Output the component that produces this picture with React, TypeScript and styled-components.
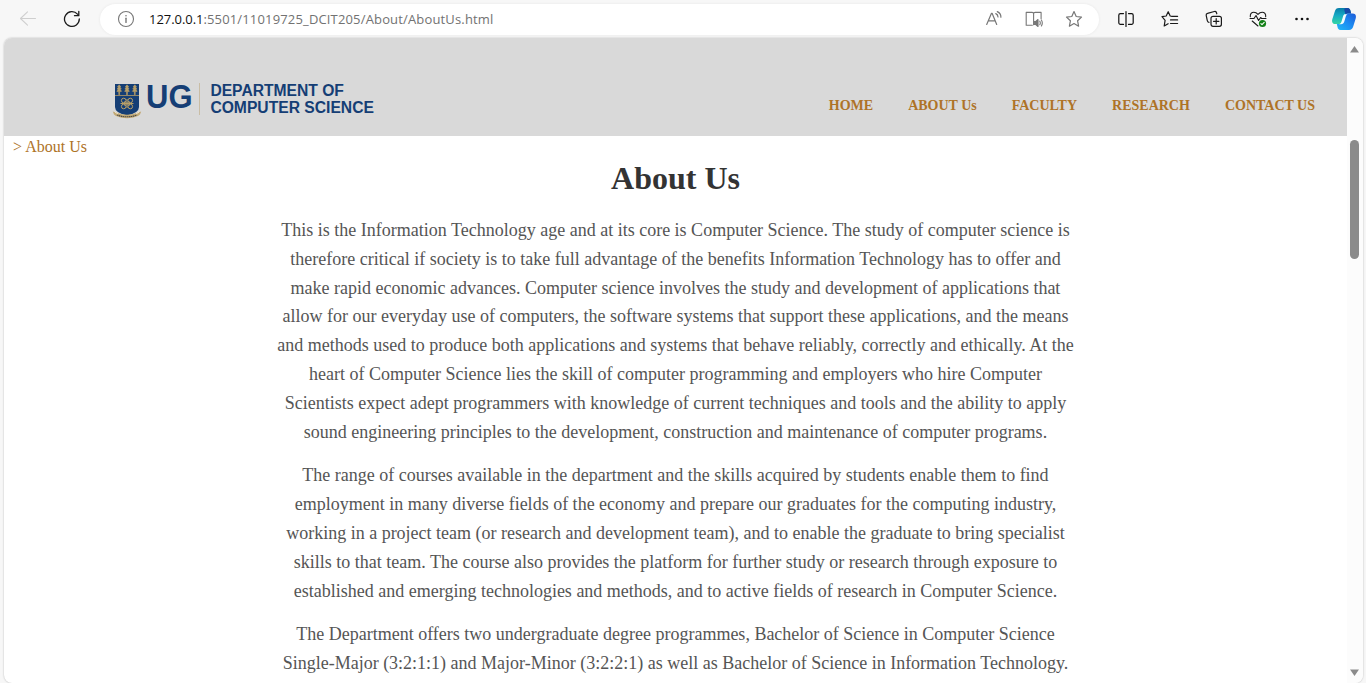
import React from "react";
import styled, { createGlobalStyle } from "styled-components";

const GlobalStyle = createGlobalStyle`
  * { box-sizing: border-box; }
  html, body { margin: 0; padding: 0; overflow: hidden; background: #f7f7f7; }
`;

const Browser = styled.div`
  width: 1366px;
  height: 683px;
  display: flex;
  flex-direction: column;
  overflow: hidden;
  background: #f7f7f7;
`;

const Toolbar = styled.div`
  height: 38px;
  flex: none;
  display: flex;
  align-items: center;
  padding-left: 19px;
`;

const IconSlot = styled.span<{ $gap?: number; $size?: number }>`
  display: flex;
  flex: none;
  width: ${(p) => p.$size ?? 18}px;
  height: ${(p) => p.$size ?? 18}px;
  margin-left: ${(p) => p.$gap ?? 0}px;
  svg { display: block; width: 100%; height: 100%; }
`;

const AddressBar = styled.div`
  width: 999px;
  height: 31px;
  margin-left: 19px;
  padding-left: 17px;
  flex: none;
  display: flex;
  align-items: center;
  border-radius: 16px;
  background: #fff;
  box-shadow: 0 0 3px rgba(0, 0, 0, 0.07);
`;

const Url = styled.span`
  width: 836px;
  margin-left: 14px;
  font: 13px/18px "Open Sans", sans-serif;
  letter-spacing: 0.16px;
  color: #727272;
  white-space: nowrap;
`;

const Host = styled.span`
  color: #111;
  letter-spacing: -0.05px;
`;

const Viewport = styled.div`
  width: 1359px;
  height: 645px;
  margin-left: 4px;
  display: flex;
  overflow: hidden;
  border-radius: 8px;
  background: #fff;
  box-shadow: 0 0 2px rgba(0, 0, 0, 0.28);
`;

const Page = styled.div`
  width: 1343px;
  flex: none;
  font-family: "Liberation Serif", "Times New Roman", serif;
`;

const Header = styled.header`
  height: 98px;
  padding-left: 108px;
  padding-right: 32px;
  display: flex;
  justify-content: space-between;
  background: #d9d9d9;
`;

const Logo = styled.svg`
  width: 270px;
  height: 42px;
  margin-top: 42px;
  font-family: "Liberation Sans", Arial, sans-serif;
  font-weight: bold;
`;

const Nav = styled.nav`
  display: flex;
  gap: 35px;
  margin-top: 59px;
`;

const NavLink = styled.a`
  font-size: 14px;
  line-height: 17px;
  font-weight: bold;
  color: #ae7327;
  white-space: nowrap;
`;

const Breadcrumb = styled.div`
  height: 22px;
  padding: 2px 0 0 9px;
  font-size: 16px;
  line-height: 18px;
  color: #ae7327;
`;

const Article = styled.main`
  width: 100%;
  text-align: center;
`;

const Title = styled.h1`
  margin: 0;
  padding-top: 2px;
  font-size: 32px;
  line-height: 36px;
  color: #333;
`;

const Paragraph = styled.p`
  margin: 0 0 15px;
  font-size: 18px;
  line-height: 28.8px;
  color: #555;
`;

const Copy = styled.div`
  padding-top: 20px;
`;

const Line = styled.span`
  display: block;
  white-space: nowrap;
`;

const Scrollbar = styled.div`
  width: 16px;
  flex: none;
  display: flex;
  flex-direction: column;
  align-items: center;
  background: #fcfcfc;
`;

const Arrow = styled.svg`
  width: 9px;
  height: 7px;
  flex: none;
  margin-top: 8px;
  margin-right: 1px;
`;

const Thumb = styled.div`
  width: 9px;
  height: 119px;
  margin: 87px 1px 402px 0;
  border-radius: 5px;
  background: #8b8b8b;
`;

const paragraphs = [
  [
    "This is the Information Technology age and at its core is Computer Science. The study of computer science is",
    "therefore critical if society is to take full advantage of the benefits Information Technology has to offer and",
    "make rapid economic advances. Computer science involves the study and development of applications that",
    "allow for our everyday use of computers, the software systems that support these applications, and the means",
    "and methods used to produce both applications and systems that behave reliably, correctly and ethically. At the",
    "heart of Computer Science lies the skill of computer programming and employers who hire Computer",
    "Scientists expect adept programmers with knowledge of current techniques and tools and the ability to apply",
    "sound engineering principles to the development, construction and maintenance of computer programs.",
  ],
  [
    "The range of courses available in the department and the skills acquired by students enable them to find",
    "employment in many diverse fields of the economy and prepare our graduates for the computing industry,",
    "working in a project team (or research and development team), and to enable the graduate to bring specialist",
    "skills to that team. The course also provides the platform for further study or research through exposure to",
    "established and emerging technologies and methods, and to active fields of research in Computer Science.",
  ],
  [
    "The Department offers two undergraduate degree programmes, Bachelor of Science in Computer Science",
    "Single-Major (3:2:1:1) and Major-Minor (3:2:2:1) as well as Bachelor of Science in Information Technology.",
  ],
];

const links = ["HOME", "ABOUT Us", "FACULTY", "RESEARCH", "CONTACT US"];

const line = { fill: "none", strokeLinecap: "round", strokeLinejoin: "round" } as const;

const BackIcon = () => (
  <svg viewBox="0 0 18 18" {...line} stroke="#cfcfcf" strokeWidth="1.1">
    <path d="M16.5 8.5H1.5M8.5 1.8L1.5 8.5l7 6.7" />
  </svg>
);

const ReloadIcon = () => (
  <svg viewBox="0 0 18 18" {...line} stroke="#1b1b1b" strokeWidth="1.3">
    <path d="M16.3 9A7.4 7.4 0 1 1 14.5 4.2M15.8 1.5v4.2h-4.3" />
  </svg>
);

const InfoIcon = () => (
  <svg viewBox="0 0 18 18" {...line} stroke="#777" strokeWidth="1.1">
    <circle cx="9" cy="9" r="7.5" />
    <path d="M9 8.2v4.2" strokeWidth="1.4" />
    <circle cx="9" cy="5.7" r=".8" fill="#777" stroke="none" />
  </svg>
);

const ReadAloudIcon = () => (
  <svg viewBox="0 0 18 18" {...line} stroke="#777" strokeWidth="1.2">
    <path d="M1.7 14.500L6.500 3.300h.6l4.600 11.200M3.300 10.800h7M10.800 3.600c1.400.7 2.200 1.800 2.200 3.300M12.300 1.600c2.300 1.100 3.700 3 3.600 5.600" />
  </svg>
);

const ReaderIcon = () => (
  <svg viewBox="0 0 18 18" {...line} stroke="#777" strokeWidth="1.1">
    <path d="M7.3 15.3H1.2V2.4h5.9c.9 0 1.5.5 1.5 1.1v11.2M8.6 3.5c0-.6.6-1.1 1.5-1.1h6v6.4" />
    <path d="M9.3 11.5h1.5l2.2-2v7l-2.2-2H9.3z" fill="#777" />
    <path d="M14.8 11.2q1 1.7 0 3.5M16.4 10q1.8 3 0 6" />
  </svg>
);

const StarIcon = () => (
  <svg viewBox="0 0 18 18" {...line} stroke="#777" strokeWidth="1.2">
    <path d="M9 1.6l2.2 4.9 5.3.6-3.9 3.700 1 5.400L9 13.600l-4.600 2.600 1-5.400L1.500 7.100l5.300-.6z" />
  </svg>
);

const SplitIcon = () => (
  <svg viewBox="0 0 18 18" {...line} stroke="#111" strokeWidth="1.2">
    <path d="M6.5 3.6H3.400a1.600 1.600 0 0 0-1.600 1.600v7.600a1.600 1.600 0 0 0 1.600 1.600h3.100M11.500 3.600h3.100a1.600 1.600 0 0 1 1.600 1.600v7.600a1.600 1.600 0 0 1-1.600 1.600h-3.100M9 1.500v15" />
  </svg>
);

const FavoritesIcon = () => (
  <svg viewBox="0 0 18 18" {...line} stroke="#1b1b1b" strokeWidth="1.2">
    <path d="M11 6.300L9.200 6 7.200 1.700 5.200 6l-4.200.7 3.100 3.600-.9 5.700 3.900-2.300M11 6.300h5.600M9.500 9.900h7.100M9.500 13.500h7.100" />
  </svg>
);

const CollectionsIcon = () => (
  <svg viewBox="0 0 18 18" {...line} stroke="#1b1b1b" strokeWidth="1.2">
    <path d="M4 12.3c-1.1-.1-1.5-.8-1.7-1.7L1.2 5.3c-.2-1 .3-1.8 1.3-2l6.800-1.800c1-.2 1.800.1 2.100 1l.4 1.300" />
    <rect x="6" y="6.300" width="10.400" height="10" rx="2" />
    <path d="M11.200 8.600v5.400M8.500 11.300h5.400" />
  </svg>
);

const HealthIcon = () => (
  <svg viewBox="0 0 18 18" {...line} stroke="#1b1b1b" strokeWidth="1.1">
    <path d="M1.3 6.8C1 4 2.6 2.2 4.8 2.2c1.8 0 3 .8 4.2 2.2 1.2-1.4 2.4-2.2 4.2-2.2 2.2 0 3.8 1.8 3.5 4.6M1 8.5h4l2-3 2.6 5 2-3 1 1H17M3.2 11l5.8 5" />
    <circle cx="13.5" cy="13.5" r="3.6" fill="#138017" stroke="none" />
    <path d="M11.9 13.7l1.1 1 2.2-2.4" stroke="#fff" />
  </svg>
);

const MoreIcon = () => (
  <svg viewBox="0 0 18 18" fill="#111">
    <circle cx="3.5" cy="9" r="1.3" />
    <circle cx="9" cy="9" r="1.3" />
    <circle cx="14.5" cy="9" r="1.3" />
  </svg>
);

const CopilotIcon = () => (
  <svg viewBox="0 0 24 24">
    <defs>
      <linearGradient id="cpLeft" x1="0" y1="0" x2="0" y2="1">
        <stop offset="0" stopColor="#087da8" />
        <stop offset=".45" stopColor="#15a9c4" />
        <stop offset="1" stopColor="#35d6a4" />
      </linearGradient>
      <linearGradient id="cpRight" x1="1" y1="0" x2="0" y2="1">
        <stop offset="0" stopColor="#1d5bd8" />
        <stop offset=".5" stopColor="#1c8cf2" />
        <stop offset="1" stopColor="#21b9f5" />
      </linearGradient>
    </defs>
    <path d="M7 1h8.500c2 0 2.600 1.400 3 3l.7 2.600h-3.300c-1.800 0-2.500 1-3 2.700l-1.400 4.800c-.6 2-1.600 3-3.600 3H3.400C.7 17.100-.5 15.300.3 12.300L2.800 4.400C3.500 2.100 4.600 1 7 1z" fill="url(#cpLeft)" />
    <path d="M14.300 1h1.200c2 0 2.600 1.400 3 3l.7 2.600h-3.300c-1.100 0-1.900.4-2.400 1.200L12.300 3c-.4-1.200.7-2 2-2z" fill="#1749a8" />
    <path d="M17 23H8.500c-2 0-2.600-1.400-3-3l-.7-2.900h3.300c2 0 3-1 3.600-3l1.400-4.800c.5-1.700 1.200-2.700 3-2.700h4.500c2.700 0 3.900 1.800 3.100 4.800l-2.500 8.200C20.500 21.900 19.400 23 17 23z" fill="url(#cpRight)" />
    <path d="M12.400 7.200h3.300c-1.200.3-1.700 1.300-2 2.600l-1.400 4.600c-.6 1.800-1.600 2.800-3.300 2.800H7c1.500-.4 2.100-1.300 2.600-2.900l1.500-5c.3-1 .7-1.700 1.300-2.100z" fill="#f3fbff" />
  </svg>
);

const DepartmentLogo = () => (
  <Logo viewBox="0 0 270 42" fill="#153e75">
    <path d="M3 4h24v23q0 6-12 8.500Q3 33 3 27z" />
    <path d="M3 15.500h24" stroke="#b29b67" strokeWidth=".8" />
    <g fill="#b89f68" stroke="#b89f68" strokeWidth=".6">
      {[7.2, 15, 22.8].map((x) => (
        <path key={x} d={`M${x} 4.800l1.700 2.200-1 .5 1.400 1.500-1.200.5 1.500 1.800-2 .5v3h-.8v-3l-2-.5 1.500-1.800-1.200-.5 1.400-1.500-1-.5z`} />
      ))}
    </g>
    <g fill="none" stroke="#b89f68" strokeWidth="1">
      <circle cx="11.700" cy="20.500" r="2.300" />
      <circle cx="18.300" cy="20.500" r="2.300" />
      <circle cx="11.700" cy="26.500" r="2.300" />
      <circle cx="18.300" cy="26.500" r="2.300" />
      <path d="M8.500 23.500h13M15 19v9M12.500 21l5 5M17.500 21l-5 5" />
    </g>
    <path d="M.8 31.500l4 1.300q10.200 4 20.400 0l4-1.300-1.200 3-2 1.600q-11 4.400-22 0l-2-1.600z" fill="#c2a975" />
    <path d="M5 35q10 3.600 20 0" fill="none" stroke="#4b4a47" strokeWidth="1.100" strokeDasharray="1.500 .5" />
    <path d="M3 32.200l3 1.700M27 32.200l-3 1.700" stroke="#eee3c7" strokeWidth="1" />
    <text x="34" y="27.800" fontSize="32.500" textLength="46.500" lengthAdjust="spacingAndGlyphs">UG</text>
    <path d="M87.500 3v32" stroke="#c9bda5" strokeWidth="1" />
    <text x="98.400" y="16" fontSize="16" textLength="133.500" lengthAdjust="spacingAndGlyphs">DEPARTMENT OF</text>
    <text x="98.400" y="32.600" fontSize="16" textLength="163.500" lengthAdjust="spacingAndGlyphs">COMPUTER SCIENCE</text>
  </Logo>
);

export default function App() {
  return (
    <Browser>
      <GlobalStyle />
      <Toolbar>
        <IconSlot><BackIcon /></IconSlot>
        <IconSlot $gap={26}><ReloadIcon /></IconSlot>
        <AddressBar>
          <IconSlot><InfoIcon /></IconSlot>
          <Url><Host>127.0.0.1</Host>:5501/11019725_DCIT205/About/AboutUs.html</Url>
          <IconSlot><ReadAloudIcon /></IconSlot>
          <IconSlot $gap={22}><ReaderIcon /></IconSlot>
          <IconSlot $gap={22}><StarIcon /></IconSlot>
        </AddressBar>
        <IconSlot $gap={18}><SplitIcon /></IconSlot>
        <IconSlot $gap={26}><FavoritesIcon /></IconSlot>
        <IconSlot $gap={26}><CollectionsIcon /></IconSlot>
        <IconSlot $gap={26}><HealthIcon /></IconSlot>
        <IconSlot $gap={26}><MoreIcon /></IconSlot>
        <IconSlot $gap={21} $size={24}><CopilotIcon /></IconSlot>
      </Toolbar>
      <Viewport>
        <Page>
          <Header>
            <DepartmentLogo />
            <Nav>{links.map((label) => <NavLink key={label}>{label}</NavLink>)}</Nav>
          </Header>
          <Breadcrumb>&gt; About Us</Breadcrumb>
          <Article>
            <Title>About Us</Title>
            <Copy>
              {paragraphs.map((lines) => (
                <Paragraph key={lines[0]}>
                  {lines.map((text) => <Line key={text}>{text}</Line>)}
                </Paragraph>
              ))}
            </Copy>
          </Article>
        </Page>
        <Scrollbar>
          <Arrow viewBox="0 0 9 7"><path d="M4.500 0L9 6.500H0z" fill="#8b8b8b" /></Arrow>
          <Thumb />
          <Arrow viewBox="0 0 9 7"><path d="M0 .5h9L4.500 7z" fill="#8b8b8b" /></Arrow>
        </Scrollbar>
      </Viewport>
    </Browser>
  );
}
